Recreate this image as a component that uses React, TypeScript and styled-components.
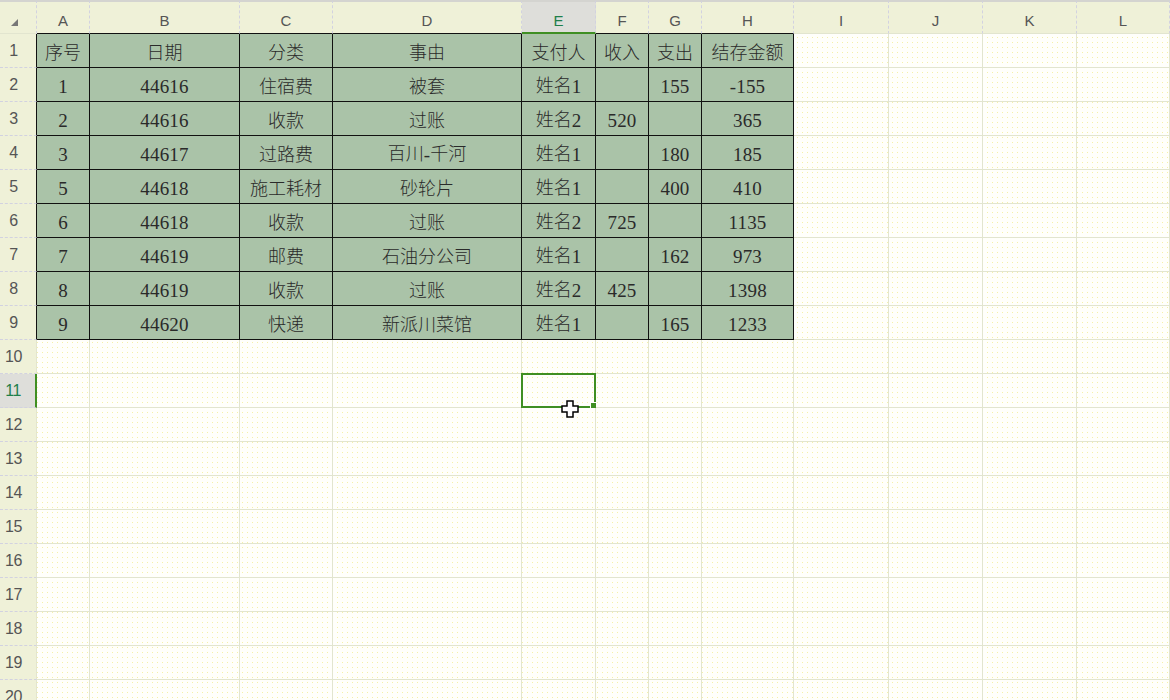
import React from "react";
import styled, { createGlobalStyle, css } from "styled-components";

const Global = createGlobalStyle`
  html, body { margin: 0; padding: 0; overflow: hidden; background: #fffffa; }
  #root { width: 1170px; height: 700px; overflow: hidden; }
`;

const GREEN = "#3f8f23";
const GRID = "#e2e5cf";
const HEAD_BG = "#eff1d8";
const FILL = "#aac3a8";

const COLS = [37, 53, 150, 93, 189, 74, 53, 53, 92, 95, 94, 94, 93];
const LETTERS = ["A", "B", "C", "D", "E", "F", "G", "H", "I", "J", "K", "L"];

const DATA: string[][] = [
  ["序号", "日期", "分类", "事由", "支付人", "收入", "支出", "结存金额"],
  ["1", "44616", "住宿费", "被套", "姓名1", "", "155", "-155"],
  ["2", "44616", "收款", "过账", "姓名2", "520", "", "365"],
  ["3", "44617", "过路费", "百川-千河", "姓名1", "", "180", "185"],
  ["5", "44618", "施工耗材", "砂轮片", "姓名1", "", "400", "410"],
  ["6", "44618", "收款", "过账", "姓名2", "725", "", "1135"],
  ["7", "44619", "邮费", "石油分公司", "姓名1", "", "162", "973"],
  ["8", "44619", "收款", "过账", "姓名2", "425", "", "1398"],
  ["9", "44620", "快递", "新派川菜馆", "姓名1", "", "165", "1233"],
];

const Sheet = styled.div`
  display: grid;
  grid-template-columns: ${COLS.map((c) => c + "px").join(" ")};
  grid-auto-rows: 34px;
  width: 1170px;
  background-color: #fffffb;
  background-image: radial-gradient(circle, #f5f0a8 0.8px, transparent 1px);
  background-size: 5px 5px;
`;

const HeadCell = styled.div<{ $sel?: boolean; $tableEdge?: boolean }>`
  box-sizing: border-box;
  display: flex;
  align-items: center;
  justify-content: center;
  padding-top: 6px;
  background: ${HEAD_BG};
  border-top: 2px solid #d4d4d0;
  border-right: 1px dashed #d2d2e0;
  border-bottom: 1px solid ${(p) => (p.$tableEdge ? "#111" : GRID)};
  font-family: "Liberation Sans", Arial, sans-serif;
  font-size: 15px;
  color: #555;
  ${(p) =>
    p.$sel &&
    css`
      background: #dededa;
      color: #1f7f4a;
      border-bottom: 2px solid ${GREEN};
    `}
`;

const Corner = styled(HeadCell)`
  justify-content: flex-start;
  align-items: flex-start;
  padding: 17px 0 0 11px;
`;

const RowHead = styled.div<{ $sel?: boolean; $tableEdge?: boolean }>`
  box-sizing: border-box;
  display: flex;
  align-items: center;
  justify-content: center;
  padding-right: 9px;
  background: ${HEAD_BG};
  border-right: 1px solid ${(p) => (p.$tableEdge ? "#111" : GRID)};
  border-bottom: 1px dashed #d2d2e0;
  font-family: "Liberation Sans", Arial, sans-serif;
  font-size: 16px;
  letter-spacing: -0.5px;
  color: #555;
  ${(p) =>
    p.$sel &&
    css`
      background: #dededa;
      color: #1f7f4a;
      border-right: 2px solid ${GREEN};
    `}
`;

const Cell = styled.div<{ $table?: boolean }>`
  box-sizing: border-box;
  position: relative;
  display: flex;
  align-items: center;
  justify-content: center;
  border-right: 1px solid ${(p) => (p.$table ? "#111" : GRID)};
  border-bottom: 1px solid ${(p) => (p.$table ? "#111" : GRID)};
  background: ${(p) => (p.$table ? FILL : "transparent")};
  font-family: "Noto Sans CJK SC", "Liberation Serif", sans-serif;
  font-weight: 300;
  font-size: 18px;
  color: #2a2a2a;
  white-space: nowrap;
`;

const Latin = styled.span`
  font-family: "Liberation Serif", serif;
  font-weight: 400;
  font-size: 19px;
  letter-spacing: 0.2px;
  vertical-align: -1px;
`;

const Selection = styled.div`
  position: absolute;
  left: -1px;
  top: -1px;
  right: -1px;
  bottom: -1px;
  border: 2px solid ${GREEN};
  pointer-events: none;
`;

const Handle = styled.div`
  position: absolute;
  right: -3px;
  bottom: -3px;
  width: 5px;
  height: 5px;
  background: ${GREEN};
  border: 1px solid #fff;
`;

const Cursor = styled.svg`
  position: absolute;
  left: 38px;
  top: 25px;
`;

function Text({ value }: { value: string }) {
  const parts = value.match(/[\x00-\x7f]+|[^\x00-\x7f]+/g) || [];
  return (
    <span>
      {parts.map((p, i) =>
        /^[\x00-\x7f]+$/.test(p) ? <Latin key={i}>{p}</Latin> : <React.Fragment key={i}>{p}</React.Fragment>
      )}
    </span>
  );
}

export default function App() {
  const rows: React.ReactNode[] = [];
  rows.push(
    <Corner key="corner">
      <svg width="7" height="7" viewBox="0 0 7 7">
        <polygon points="7,0 7,7 0,7" fill="#777" />
      </svg>
    </Corner>
  );
  LETTERS.forEach((l, i) => {
    rows.push(
      <HeadCell key={"h" + l} $sel={l === "E"} $tableEdge={i < 8}>
        {l}
      </HeadCell>
    );
  });

  for (let r = 1; r <= 20; r++) {
    rows.push(
      <RowHead key={"r" + r} $sel={r === 11} $tableEdge={r <= 9}>
        {r}
      </RowHead>
    );
    for (let c = 0; c < 12; c++) {
      const inTable = r <= 9 && c < 8;
      const val = inTable ? DATA[r - 1][c] : "";
      const selected = r === 11 && c === 4;
      rows.push(
        <Cell key={`c${r}-${c}`} $table={inTable}>
          {val && <Text value={val} />}
          {selected && (
            <Selection>
              <Handle />
              <Cursor width="18" height="18" viewBox="0 0 18 18">
                <path
                  d="M6 1 H12 V6 H17 V12 H12 V17 H6 V12 H1 V6 H6 Z"
                  fill="#fff"
                  stroke="#000"
                  strokeWidth="1.5"
                />
              </Cursor>
            </Selection>
          )}
        </Cell>
      );
    }
  }

  return (
    <>
      <Global />
      <Sheet>{rows}</Sheet>
    </>
  );
}
